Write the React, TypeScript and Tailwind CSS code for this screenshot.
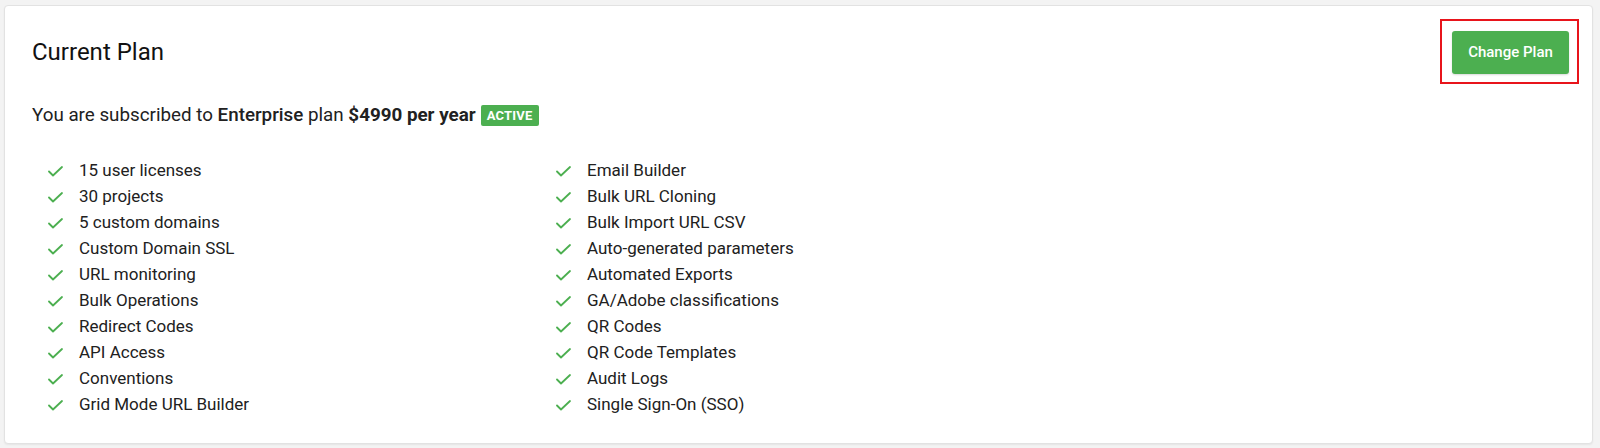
import { Fragment } from 'react';

const leftFeatures = [
  '15 user licenses',
  '30 projects',
  '5 custom domains',
  'Custom Domain SSL',
  'URL monitoring',
  'Bulk Operations',
  'Redirect Codes',
  'API Access',
  'Conventions',
  'Grid Mode URL Builder',
];

const rightFeatures = [
  'Email Builder',
  'Bulk URL Cloning',
  'Bulk Import URL CSV',
  'Auto-generated parameters',
  'Automated Exports',
  'GA/Adobe classifications',
  'QR Codes',
  'QR Code Templates',
  'Audit Logs',
  'Single Sign-On (SSO)',
];

function CheckIcon() {
  return (
    <svg width="15" height="11" viewBox="0 0 15 11" fill="none" className="shrink-0">
      <polyline
        points="1,5.5 5,9.5 14,1"
        stroke="#4caf50"
        strokeWidth="1.8"
        strokeLinecap="round"
        strokeLinejoin="round"
      />
    </svg>
  );
}

function FeatureList({ items }: { items: string[] }) {
  return (
    <ul className="flex flex-col">
      {items.map((item) => (
        <li key={item} className="flex items-center h-[26px]">
          <span className="w-[31px] flex items-center">
            <CheckIcon />
          </span>
          <span>{item}</span>
        </li>
      ))}
    </ul>
  );
}

export default function App() {
  return (
    <div
      className="w-[1600px] h-[448px] bg-[#f3f3f3] pt-[5px] pl-[4px] pr-[7px]"
      style={{ fontFamily: 'Roboto, "Noto Sans", sans-serif' }}
    >
      <div className="h-[439px] bg-white border border-[#e2e2e2] rounded-[4px] shadow-[0_1px_2px_rgba(0,0,0,0.06)] pl-[27px] pr-[13px] pt-[13px] text-[#212121]">
        <div className="flex items-center justify-between">
          <h2 className="text-[24px] leading-[32px] font-normal text-[#111]">Current Plan</h2>
          <div className="border-2 border-[#e8141b] pl-[10px] pr-[8px] pt-[10px] pb-[8px]">
            <button className="h-[43px] w-[117px] bg-[#4caf50] text-white text-[15px] font-medium rounded-[3px] shadow-[0_1px_2px_rgba(0,0,0,0.15)]">
              Change Plan
            </button>
          </div>
        </div>

        <p className="mt-[18px] text-[18.8px] leading-[27px] flex items-center">
          <span>
            You are subscribed to <span className="font-medium">Enterprise</span> plan{' '}
            <span className="font-bold">$4990 per year</span>
          </span>
          <span className="ml-[5px] inline-flex items-center justify-center h-[21px] w-[58px] bg-[#4caf50] rounded-[2px] text-white text-[13px] font-bold tracking-[0.2px]">
            ACTIVE
          </span>
        </p>

        <div className="mt-[29px] pl-[16px] grid grid-cols-[508px_1fr] text-[17px]">
          <Fragment>
            <FeatureList items={leftFeatures} />
            <FeatureList items={rightFeatures} />
          </Fragment>
        </div>
      </div>
    </div>
  );
}
